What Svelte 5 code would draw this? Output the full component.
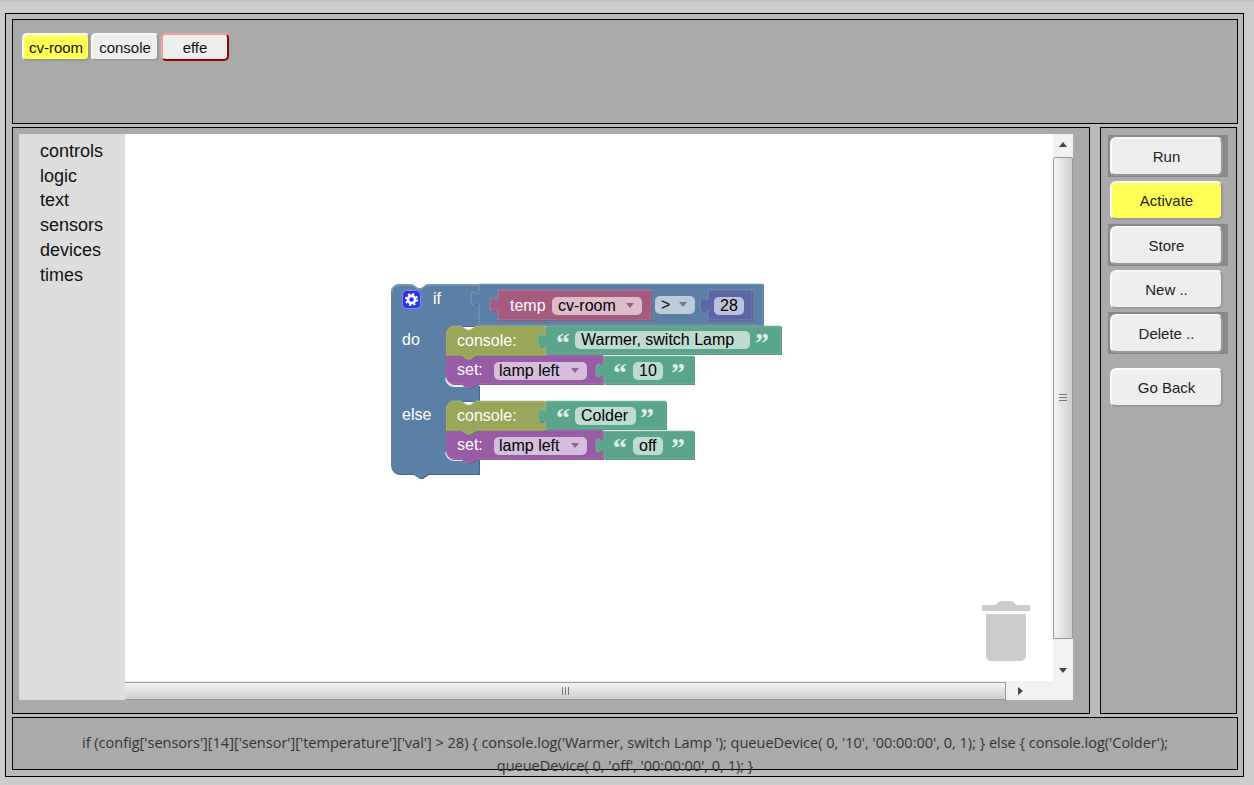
<script>
  const tabs = [
    { label: "cv-room", kind: "on" },
    { label: "console", kind: "" },
    { label: "effe", kind: "sel" },
  ];
  const cats = ["controls", "logic", "text", "sensors", "devices", "times"];
  const buttons = [
    { label: "Run", wrap: true },
    { label: "Activate", active: true },
    { label: "Store", wrap: true },
    { label: "New ..", },
    { label: "Delete ..", wrap: true },
  ];

  const TAB = "c 0,-10 -8,8 -8,-7.5 s 8,2.5 8,-7.5";

  // blockly style outline: top notch, bottom notch, left value tab
  function shape(x, y, w, h, o = {}) {
    const r = o.round ? 8 : 0;
    let d = o.roundTop ? `M${x},${y + 8} a8,8 0 0 1 8,-8` : `M${x},${y}`;
    if (o.notch) d += ` H${x + 15} l6,4 3,0 6,-4`;
    d += ` H${x + w} V${y + h}`;
    if (o.notchBottom) d += ` H${x + 30} l-6,4 -3,0 -6,-4`;
    if (r) d += ` H${x + 8} a8,8 0 0 1 -8,-8`;
    else d += ` H${x}`;
    if (o.tab) d += ` V${y + 22} ${TAB}`;
    return d + " Z";
  }

  const blue = "#5b80a5";
  const COMPARE = { c: blue, dark: "#49668a", light: "#8ca6c0", d: shape(479, 284, 284, 41, { tab: true }) };
  const blocks = [
    { c: "#a55b80", dark: "#844966", light: "#c08ca6", d: shape(498, 290, 153, 30, { tab: true }) },
    { c: "#5b67a5", dark: "#495284", light: "#8c95c0", d: shape(708, 290, 44, 30, { tab: true }) },
    { c: "#985ba5", dark: "#7a4984", light: "#b98cc0", d: shape(446, 355, 157, 29, { round: true, notchBottom: true }) },
    { c: "#99a65a", dark: "#7b8548", light: "#bac18c", d: shape(446, 326, 99, 29, { roundTop: true, notch: true, notchBottom: true }) },
    { c: "#5ba58c", dark: "#498470", light: "#8cc0ae", d: shape(546, 326, 235, 28, { tab: true }) },
    { c: "#5ba58c", dark: "#498470", light: "#8cc0ae", d: shape(604, 356, 90, 28, { tab: true }) },
    { c: "#985ba5", dark: "#7a4984", light: "#b98cc0", d: shape(446, 430, 157, 29, { round: true, notchBottom: true }) },
    { c: "#99a65a", dark: "#7b8548", light: "#bac18c", d: shape(446, 401, 99, 29, { roundTop: true, notch: true, notchBottom: true }) },
    { c: "#5ba58c", dark: "#498470", light: "#8cc0ae", d: shape(546, 401, 120, 28, { tab: true }) },
    { c: "#5ba58c", dark: "#498470", light: "#8cc0ae", d: shape(604, 431, 90, 28, { tab: true }) },
  ];

  const ifBlock =
    "M391,292 a8,8 0 0 1 8,-8 H412 l6,4 3,0 6,-4 H479 V326 H453 a8,8 0 0 0 -8,8 V377 a8,8 0 0 0 8,8 H479 V401 H453 a8,8 0 0 0 -8,8 V451 a8,8 0 0 0 8,8 H479 V474 H428 l-6,4 -3,0 -6,-4 H399 a8,8 0 0 1 -8,-8 Z";

  // x, y, w, fill, text
  const pills = [
    { x: 552, y: 297, w: 90, fill: "#dbbdcc", text: "cv-room", tx: 558, arrow: "#a55b80" },
    { x: 655, y: 296, w: 40, fill: "#bdccdb", text: ">", tx: 661, arrow: blue },
    { x: 714, y: 297, w: 30, fill: "#bdc2db", text: "28", tx: 720 },
    { x: 575, y: 331, w: 175, fill: "#bddbd1", text: "Warmer, switch Lamp", tx: 581 },
    { x: 494, y: 362, w: 93, fill: "#d5bddb", text: "lamp left", tx: 499, arrow: "#985ba5" },
    { x: 633, y: 362, w: 30, fill: "#bddbd1", text: "10", tx: 639 },
    { x: 575, y: 407, w: 61, fill: "#bddbd1", text: "Colder", tx: 581 },
    { x: 494, y: 437, w: 93, fill: "#d5bddb", text: "lamp left", tx: 499, arrow: "#985ba5" },
    { x: 633, y: 437, w: 30, fill: "#bddbd1", text: "off", tx: 639 },
  ];
  const labels = [
    { x: 433, y: 304, t: "if" },
    { x: 402, y: 345, t: "do" },
    { x: 402, y: 420, t: "else" },
    { x: 510, y: 311, t: "temp" },
    { x: 457, y: 346, t: "console:" },
    { x: 457, y: 375, t: "set:" },
    { x: 457, y: 421, t: "console:" },
    { x: 457, y: 450, t: "set:" },
  ];
  const quotes = [
    { x: 563, y: 336 }, { x: 762, y: 336, close: true },
    { x: 620, y: 366 }, { x: 678, y: 366, close: true },
    { x: 563, y: 411 }, { x: 647, y: 411, close: true },
    { x: 620, y: 441 }, { x: 678, y: 441, close: true },
  ];
</script>

<div class="outer">
  <section class="panel top">
    {#each tabs as t}
      <button class="tab {t.kind}">{t.label}</button>
    {/each}
  </section>

  <div class="middle">
    <section class="panel editor">
      <div class="workspace">
        <ul class="cats">
          {#each cats as c}
            <li>{c}</li>
          {/each}
        </ul>
        <div class="canvas">
          <svg width="928" height="547" viewBox="125 134 928 547">
            <path d={ifBlock} fill="#49668a" transform="translate(1,1)" />
            <path d={ifBlock} fill={blue} />
            <path d="M392,292 a7,7 0 0 1 7,-7 H412 l6,4 3,0 6,-4 H479" fill="none" stroke="#8ca6c0" />
            <path d="M446,378 a8,8 0 0 0 8,8 H470" fill="none" stroke="#e6ecf2" stroke-width="2" />
            <path d="M446,452 a8,8 0 0 0 8,8 H470" fill="none" stroke="#e6ecf2" stroke-width="2" />

            <path d={COMPARE.d} fill={COMPARE.dark} transform="translate(1,1)" />
            <path d={COMPARE.d} fill={COMPARE.c} stroke={COMPARE.light} stroke-width="0.7" />

            {#each blocks as b}
              <path d={b.d} fill={b.dark} transform="translate(1,1)" />
              <path d={b.d} fill={b.c} stroke={b.light} stroke-width="0.6" />
            {/each}

            <!-- mutator gear -->
            <rect x="402.5" y="290.5" width="18" height="18" rx="4" fill="#3030e8" stroke="#8c8cf0" />
            <circle cx="411.5" cy="299.5" r="3.6" fill="none" stroke="#fff" stroke-width="2.6" />
            <circle cx="411.5" cy="299.5" r="5.6" fill="none" stroke="#fff" stroke-width="1.8" stroke-dasharray="2.2 2.2" />

            {#each labels as l}
              <text x={l.x} y={l.y} class="lbl">{l.t}</text>
            {/each}

            {#each pills as p}
              <rect x={p.x} y={p.y} width={p.w} height="18" rx="5" fill={p.fill} />
              <text x={p.tx} y={p.y + 14} class="val">{p.text}</text>
              {#if p.arrow}
                <polygon points="{p.x + p.w - 16},{p.y + 6} {p.x + p.w - 8},{p.y + 6} {p.x + p.w - 12},{p.y + 11}" fill={p.arrow} />
              {/if}
            {/each}

            {#each quotes as q}
              <text x={q.x} y={q.y + 16} class="quote" text-anchor="middle">{q.close ? "”" : "“"}</text>
            {/each}

            <!-- trash -->
            <g fill="#cccccc">
              <path d="M982,605 H996 q2,-4 6,-4 h8 q4,0 6,4 H1030 V611 H982 Z" />
              <path d="M986,614 H1026 V656 a5,5 0 0 1 -5,5 H991 a5,5 0 0 1 -5,-5 Z" />
            </g>
          </svg>
        </div>
        <div class="vbar">
          <span class="arr up"></span>
          <div class="vthumb"><span class="grip-h"></span></div>
          <span class="arr down"></span>
        </div>
        <div class="hbar">
          <div class="hthumb"><span class="grip-v"></span></div>
          <span class="arr right"></span>
        </div>
        <div class="corner"></div>
      </div>
    </section>

    <section class="panel side">
      {#each buttons as b}
        <div class="slot" class:wrap={b.wrap}>
          <button class="act" class:active={b.active}>{b.label}</button>
        </div>
      {/each}
      <div class="slot back">
        <button class="act">Go Back</button>
      </div>
    </section>
  </div>

  <section class="panel code">
    <p>if (config['sensors'][14]['sensor']['temperature']['val'] &gt; 28) &#123; console.log('Warmer, switch Lamp '); queueDevice( 0, '10', '00:00:00', 0, 1); &#125; else &#123; console.log('Colder'); queueDevice( 0, 'off', '00:00:00', 0, 1); &#125;</p>
  </section>
</div>

<style>
  :global(body) {
    margin: 0;
    background: #cccccc;
    border-top: 2px solid #b9c4cf;
    font-family: "Liberation Sans", Arial, sans-serif;
    overflow: hidden;
  }

  .outer {
    box-sizing: border-box;
    width: 1239px;
    height: 764px;
    margin: 11px 0 0 5px;
    padding: 5px 5px 4px 6px;
    border: 1px solid #000;
    background: #bbbbbb;
    display: flex;
    flex-direction: column;
    gap: 3px;
  }

  .panel {
    box-sizing: border-box;
    border: 1px solid #000;
    background: #aaaaaa;
  }

  .top {
    height: 105px;
    padding: 13px 0 0 9px;
    display: flex;
    align-items: flex-start;
    gap: 1px;
  }

  .tab {
    box-sizing: border-box;
    width: 68px;
    height: 28px;
    padding: 0;
    border: 2px solid;
    border-color: #fafafa #999 #999 #fafafa;
    border-radius: 5px;
    background: #eeeeee;
    color: #111;
    font: 15px "Liberation Sans", Arial, sans-serif;
  }

  .tab.on {
    background: #ffff55;
  }

  .tab.sel {
    margin-left: 1px;
    border-color: #f0a0a0 #990000 #990000 #f0a0a0;
  }

  .middle {
    display: flex;
    gap: 10px;
    height: 587px;
  }

  .editor {
    width: 1078px;
    padding: 6px 16px 12px 6px;
  }

  .workspace {
    display: grid;
    grid-template-columns: 106px 928px 20px;
    grid-template-rows: 547px 19px;
    height: 566px;
  }

  .cats {
    grid-row: 1 / 3;
    margin: 0;
    padding: 5px 0 0 21px;
    list-style: none;
    background: #dddddd;
    font-size: 18px;
    line-height: 24.7px;
    color: #111;
  }

  .canvas {
    background: #fff;
    overflow: hidden;
  }

  .canvas svg {
    display: block;
  }

  .lbl {
    font: 16px "Liberation Sans", Arial, sans-serif;
    fill: #fff;
  }

  .val {
    font: 16px "Liberation Sans", Arial, sans-serif;
    fill: #000;
  }

  .quote {
    font: bold 28px "Liberation Serif", serif;
    fill: #dcefe8;
  }

  .vbar {
    background: #f1f1f1;
    display: flex;
    flex-direction: column;
    align-items: center;
    justify-content: space-between;
    padding: 8px 0 8px;
  }

  .vthumb {
    box-sizing: border-box;
    flex: none;
    width: 20px;
    height: 482px;
    margin-top: 2px;
    margin-bottom: 22px;
    border: 1px solid #999;
    border-radius: 2px 2px 0 0;
    background: linear-gradient(to right, #f4f4f4, #cfcfcf);
    display: flex;
    align-items: center;
    justify-content: center;
  }

  .grip-h {
    width: 8px;
    height: 7px;
    background: repeating-linear-gradient(to bottom, #777 0 1px, transparent 1px 3px);
  }

  .hbar {
    background: #f1f1f1;
    display: flex;
    align-items: center;
    justify-content: space-between;
    padding-right: 30px;
  }

  .hthumb {
    box-sizing: border-box;
    width: 881px;
    height: 18px;
    border: 1px solid #999;
    border-left: none;
    background: linear-gradient(to bottom, #f4f4f4, #cfcfcf);
    display: flex;
    align-items: center;
    justify-content: center;
  }

  .grip-v {
    width: 7px;
    height: 8px;
    background: repeating-linear-gradient(to right, #777 0 1px, transparent 1px 3px);
  }

  .corner {
    background: #f1f1f1;
  }

  .arr {
    display: block;
    flex: none;
    width: 0;
    height: 0;
    border-style: solid;
    border-color: transparent;
  }

  .arr.up {
    border-width: 0 4px 5px;
    border-bottom-color: #444;
  }

  .arr.down {
    border-width: 5px 4px 0;
    border-top-color: #444;
  }

  .arr.right {
    border-width: 4px 0 4px 5px;
    border-left-color: #444;
  }

  .side {
    width: 137px;
    padding: 7px 0 0 7px;
    display: flex;
    flex-direction: column;
    gap: 2.3px;
  }

  .slot {
    box-sizing: border-box;
    width: 120px;
    height: 42px;
    padding: 2px;
  }

  .slot.wrap {
    background: #888888;
  }

  .slot.back {
    margin-top: 10px;
  }

  .act {
    display: block;
    box-sizing: border-box;
    width: 113px;
    height: 39px;
    padding: 0;
    border: 2px solid;
    border-color: #fafafa #999 #999 #fafafa;
    border-radius: 6px;
    background: #eeeeee;
    color: #222;
    font: 15px "Liberation Sans", Arial, sans-serif;
  }

  .act.active {
    background: #ffff55;
  }

  .code {
    height: 53px;
    padding: 13px 60px 0;
  }

  .code p {
    margin: 0;
    text-align: center;
    font: 14.5px/23px "Open Sans", sans-serif;
    color: #333;
  }
</style>
